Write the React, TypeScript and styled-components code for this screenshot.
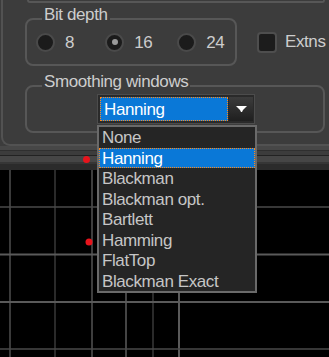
import styled, { createGlobalStyle } from 'styled-components';

const GlobalStyle = createGlobalStyle`
  html, body {
    margin: 0;
    padding: 0;
    background: #3c3c3c;
  }
  body {
    font-family: "Liberation Sans", Arial, sans-serif;
    font-size: 17px;
    letter-spacing: -0.4px;
  }
`;

const BG = '#3c3c3c';
const EDGE = '#575757';
const TEXT = '#cdcdcd';
const BLUE = '#0a78d7';
const ORANGE = '#ff8a1c';

const Root = styled.div`
  width: 329px;
  height: 357px;
  overflow: hidden;
  display: flex;
  flex-direction: column;
  background: ${BG};
`;

const Panel = styled.div`
  height: 146px;
  box-sizing: border-box;
  margin-left: 1px;
  padding-left: 22px;
  border-left: 2px solid #525252;
  border-bottom: 2px solid #525252;
  border-bottom-left-radius: 9px;
  display: flex;
  flex-direction: column;
`;

const GroupTail = styled.div`
  margin-left: 2px;
  width: 298px;
  height: 3px;
  box-sizing: border-box;
  border: 2px solid ${EDGE};
  border-top: none;
  border-bottom-left-radius: 6px;
  border-bottom-right-radius: 6px;
`;

const Row = styled.div<{ $top: number }>`
  margin-top: ${(p) => p.$top}px;
  display: flex;
  align-items: center;
`;

const Group = styled.div<{ $width: number; $padLeft: number }>`
  position: relative;
  box-sizing: border-box;
  width: ${(p) => p.$width}px;
  height: 48px;
  border: 2px solid ${EDGE};
  border-radius: 8px;
  display: flex;
  align-items: center;
  padding-left: ${(p) => p.$padLeft}px;
`;

const Legend = styled.span`
  position: absolute;
  top: -14px;
  left: 15px;
  padding: 0 2px;
  background: ${BG};
  color: ${TEXT};
  line-height: 18px;
  white-space: nowrap;
`;

const Option = styled.label<{ $width: number }>`
  width: ${(p) => p.$width}px;
  display: flex;
  align-items: center;
  gap: 10px;
  color: ${TEXT};
  line-height: 19px;
  padding-top: 1px;
`;

const Radio = styled.span<{ $checked?: boolean }>`
  width: 19px;
  height: 19px;
  margin-top: -1px;
  box-sizing: border-box;
  border-radius: 50%;
  border: 2px solid #4a4a4a;
  background: #1b1b1b;
  display: flex;
  align-items: center;
  justify-content: center;

  &::after {
    content: '';
    display: ${(p) => (p.$checked ? 'block' : 'none')};
    width: 6px;
    height: 6px;
    border-radius: 50%;
    background: #9a9a9a;
  }
`;

const CheckWrap = styled.label`
  margin-left: 20px;
  display: flex;
  align-items: center;
  gap: 8px;
  color: ${TEXT};
`;

const CheckBox = styled.span`
  width: 20px;
  height: 21px;
  box-sizing: border-box;
  border: 2px solid #4e4e4e;
  border-radius: 4px;
  background: #1c1c1c;
`;

const Combo = styled.div`
  position: relative;
  width: 158px;
  height: 30px;
  box-sizing: border-box;
  border: 1px solid #4c4c4c;
  background: #2a2a2a;
  padding: 2px 1px 2px 2px;
  display: flex;
  gap: 1px;
`;

const Field = styled.div`
  width: 128px;
  box-sizing: border-box;
  background: ${BLUE};
  border: 1px dotted ${ORANGE};
  color: #fff;
  padding: 2px 0 0 3px;
  display: flex;
  align-items: center;
`;

const DropButton = styled.div`
  flex: 1;
  background: linear-gradient(#3c3c3c, #1f1f1f);
  display: flex;
  align-items: center;
  justify-content: center;
`;

const DropList = styled.ul`
  position: absolute;
  top: calc(100% + 2px);
  left: -1px;
  z-index: 10;
  width: 160px;
  margin: 0;
  padding: 0;
  list-style: none;
  box-sizing: border-box;
  border: 2px solid #6a6a6a;
  background: #252525;
`;

const Item = styled.li<{ $selected?: boolean }>`
  height: 20.5px;
  box-sizing: border-box;
  padding-top: ${(p) => (p.$selected ? 1 : 2)}px;
  padding-left: ${(p) => (p.$selected ? 2 : 3)}px;
  line-height: 18.5px;
  white-space: nowrap;
  color: ${(p) => (p.$selected ? '#fff' : '#c6c6c6')};
  background: ${(p) => (p.$selected ? BLUE : 'transparent')};
  border: ${(p) => (p.$selected ? `1px dotted ${ORANGE}` : 'none')};
`;

const Strip = styled.div`
  position: relative;
  height: 24px;
  flex-shrink: 0;
  background: linear-gradient(
    #474747 0px,
    #474747 4px,
    #2f2f2f 4px,
    #2f2f2f 5px,
    #3c3c3c 5px,
    #3c3c3c 9px,
    #222 9px,
    #222 10px,
    #464646 10px,
    #464646 16px,
    #363636 16px,
    #363636 18px,
    #2b2b2b 18px
  );
`;

const Marker = styled.span`
  position: absolute;
  left: 83px;
  top: 10px;
  width: 7px;
  height: 7px;
  border-radius: 50%;
  background: #e8141c;
`;

const Chart = styled.div`
  flex: 1;
  background: #000;
  svg {
    display: block;
  }
`;

const windows = ['None', 'Hanning', 'Blackman', 'Blackman opt.', 'Bartlett', 'Hamming', 'FlatTop', 'Blackman Exact'];

const vLines = [
  { x: 10, w: 2, c: '#3a3a3a' },
  { x: 55, w: 1.5, c: '#383838' },
  { x: 92, w: 2, c: '#3e3e3e' },
  { x: 126, w: 2, c: '#444' },
  { x: 153, w: 1.5, c: '#383838' },
  { x: 179, w: 2, c: '#5a5a5a' },
];

const hLines = [
  { y: 37, w: 1.5, c: '#4a4a4a' },
  { y: 84.5, w: 2, c: '#5a5a5a' },
  { y: 132, w: 2, c: '#5a5a5a' },
  { y: 179, w: 1.5, c: '#4a4a4a' },
];

const App = () => {
  const selected = 'Hanning';
  return (
    <Root>
      <GlobalStyle />
      <Panel>
        <GroupTail />
        <Row $top={15}>
          <Group $width={212} $padLeft={9}>
            <Legend>Bit depth</Legend>
            <Option $width={72}>
              <Radio />8
            </Option>
            <Option $width={75}>
              <Radio $checked />16
            </Option>
            <Option $width={60}>
              <Radio />24
            </Option>
          </Group>
          <CheckWrap>
            <CheckBox />
            Extns
          </CheckWrap>
        </Row>
        <Row $top={19}>
          <Group $width={300} $padLeft={70}>
            <Legend>Smoothing windows</Legend>
            <Combo>
              <Field>{selected}</Field>
              <DropButton>
                <svg width="11" height="6" viewBox="0 0 11 6">
                  <polygon points="0,0 11,0 7,4 6,6 5,6 4,4" fill="#fff" />
                </svg>
              </DropButton>
              <DropList>
                {windows.map((w) => (
                  <Item key={w} $selected={w === selected}>
                    {w}
                  </Item>
                ))}
              </DropList>
            </Combo>
          </Group>
        </Row>
      </Panel>
      <Strip>
        <Marker />
      </Strip>
      <Chart>
        <svg width="329" height="187">
          {vLines.map((l) => (
            <line key={l.x} x1={l.x} x2={l.x} y1={0} y2={187} stroke={l.c} strokeWidth={l.w} />
          ))}
          {hLines.map((l) => (
            <line key={l.y} x1={0} x2={329} y1={l.y} y2={l.y} stroke={l.c} strokeWidth={l.w} />
          ))}
          <circle cx={89} cy={72} r={3.5} fill="#e8141c" />
        </svg>
      </Chart>
    </Root>
  );
};

export default App;
